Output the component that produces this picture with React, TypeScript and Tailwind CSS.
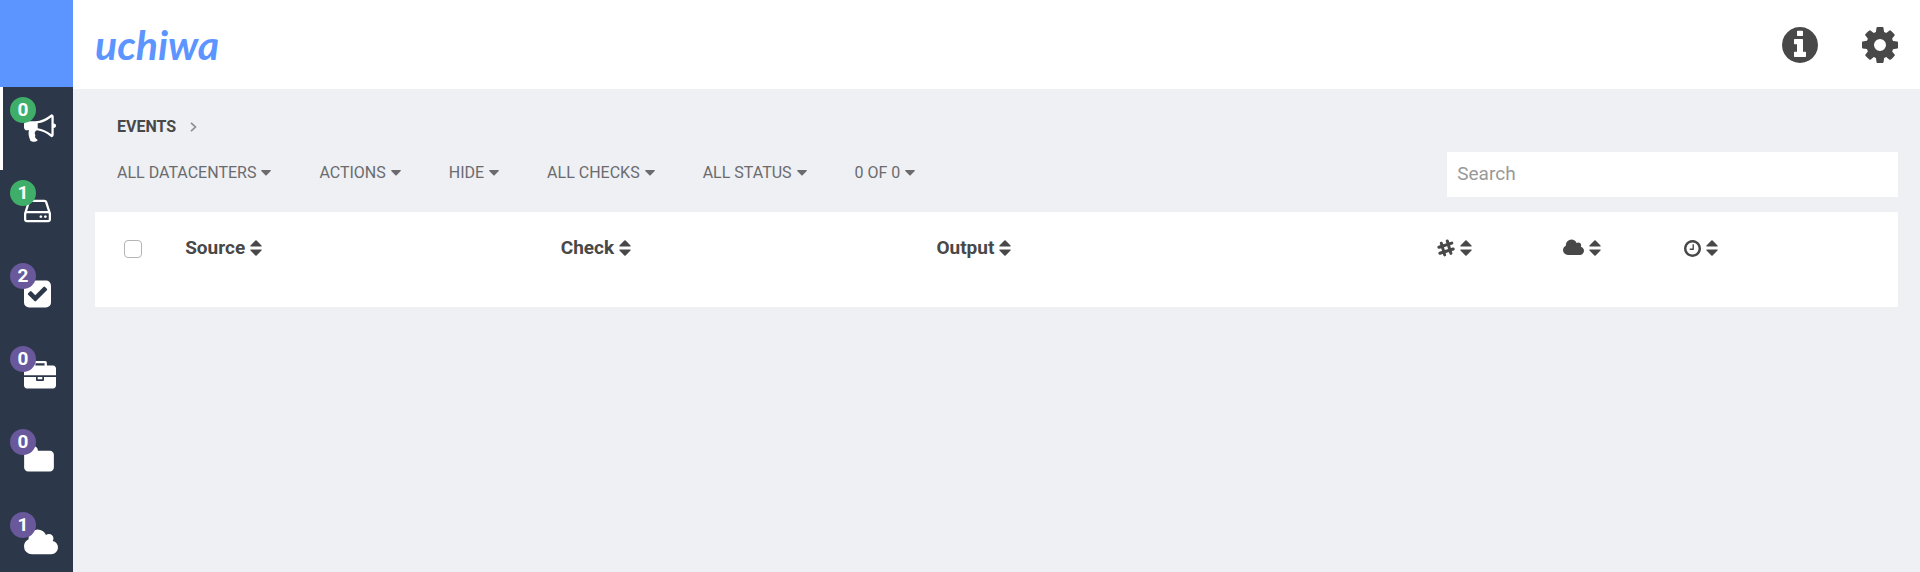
import { useState } from 'react';
import type { ReactNode } from 'react';

type IconProps = { d: string; viewBox?: string; className?: string };

const ICONS = {
  bullhorn:
    'M1664 640q53 0 90.5 37.5t37.5 90.5-37.5 90.5-90.5 37.5v384q0 52-38 90t-90 38q-417-347-812-380-58 19-91 66t-31 100.5 40 92.5q-20 33-23 65.5t6 58 33.5 55 48 50 61.5 50.5q-29 58-111.5 83t-168.5 11.5-132-55.5q-7-23-29.5-87.5t-32-94.5-23-89-15-101 3.5-98.5 22-110.5h-122q-66 0-113-47t-47-113v-192q0-66 47-113t113-47h480q435 0 896-384 52 0 90 38t38 90v384zm-128 604v-954q-394 302-768 343v270q377 42 768 341z',
  hdd:
    'M1168 1216q0 33-23.5 56.5t-56.5 23.5-56.5-23.5-23.5-56.5 23.5-56.5 56.5-23.5 56.5 23.5 23.5 56.5zm256 0q0 33-23.5 56.5t-56.5 23.5-56.5-23.5-23.5-56.5 23.5-56.5 56.5-23.5 56.5 23.5 23.5 56.5zm112 160v-320q0-13-9.5-22.5t-22.5-9.5h-1216q-13 0-22.5 9.5t-9.5 22.5v320q0 13 9.5 22.5t22.5 9.5h1216q13 0 22.5-9.5t9.5-22.5zm-1230-480h1180l-157-482q-4-13-16-21.5t-26-8.5h-782q-14 0-26 8.5t-16 21.5zm1358 160v320q0 66-47 113t-113 47h-1216q-66 0-113-47t-47-113v-320q0-25 16-75l197-606q17-53 63-86t101-33h782q55 0 101 33t63 86l197 606q16 50 16 75z',
  check:
    'M813 1299l614-614q19-19 19-45t-19-45l-102-102q-19-19-45-19t-45 19l-467 467-211-211q-19-19-45-19t-45 19l-102 102q-19 19-19 45t19 45l358 358q19 19 45 19t45-19zm851-883v960q0 119-84.5 203.5t-203.5 84.5h-960q-119 0-203.5-84.5t-84.5-203.5v-960q0-119 84.5-203.5t203.5-84.5h960q119 0 203.5 84.5t84.5 203.5z',
  briefcase:
    'M640 256h512v-128h-512v128zm1152 640v480q0 66-47 113t-113 47h-1472q-66 0-113-47t-47-113v-480h672v160q0 26 19 45t45 19h320q26 0 45-19t19-45v-160h672zm-768 0v128h-256v-128h256zm768-480v384h-1792v-384q0-66 47-113t113-47h352v-160q0-40 28-68t68-28h576q40 0 68 28t28 68v160h352q66 0 113 47t47 113z',
  folder:
    'M1728 608v704q0 92-66 158t-158 66h-1216q-92 0-158-66t-66-158v-960q0-92 66-158t158-66h320q92 0 158 66t66 158v32h672q92 0 158 66t66 158z',
  cloud:
    'M1984 1152q0 159-112.5 271.5t-271.5 112.5h-1088q-185 0-316.5-131.5t-131.5-316.5q0-132 71-241.5t187-163.5q-2-28-2-43 0-212 150-362t362-150q158 0 286.5 88t187.5 230q70-62 166-62 106 0 181 75t75 181q0 75-41 138 129 30 213 134.5t84 239.5z',
  info:
    'M1152 1376v-160q0-14-9-23t-23-9h-96v-512q0-14-9-23t-23-9h-320q-14 0-23 9t-9 23v160q0 14 9 23t23 9h96v320h-96q-14 0-23 9t-9 23v160q0 14 9 23t23 9h448q14 0 23-9t9-23zm-128-896v-160q0-14-9-23t-23-9h-192q-14 0-23 9t-9 23v160q0 14 9 23t23 9h192q14 0 23-9t9-23zm640 416q0 209-103 385.5t-279.5 279.5-385.5 103-385.5-103-279.5-279.5-103-385.5 103-385.5 279.5-279.5 385.5-103 385.5 103 279.5 279.5 103 385.5z',
  cog:
    'M1152 896q0-106-75-181t-181-75-181 75-75 181 75 181 181 75 181-75 75-181zm512-109v222q0 12-8 23t-20 13l-185 28q-19 54-39 91 35 50 107 138 10 12 10 25t-9 23q-27 37-99 108t-94 71q-12 0-26-9l-138-108q-44 23-91 38-16 136-29 186-7 28-36 28h-222q-14 0-24.5-8.5t-11.5-21.5l-28-184q-49-16-90-37l-141 107q-10 9-25 9-14 0-25-11-126-114-165-168-7-10-7-23 0-12 8-23 15-21 51-66.5t54-70.5q-27-50-41-99l-183-27q-13-2-21-12.5t-8-23.5v-222q0-12 8-23t19-13l186-28q14-46 39-92-40-57-107-138-10-12-10-24 0-10 9-23 26-36 98.5-107.5t94.5-71.5q13 0 26 10l138 107q44-23 91-38 16-136 29-186 7-28 36-28h222q14 0 24.5 8.5t11.5 21.5l28 184q49 16 90 37l142-107q9-9 24-9 13 0 25 10 129 119 165 170 7 8 7 22 0 12-8 23-15 21-51 66.5t-54 70.5q26 50 41 98l183 28q13 2 21 12.5t8 23.5z',
  clock:
    'M1024 544v448q0 14-9 23t-23 9h-320q-14 0-23-9t-9-23v-64q0-14 9-23t23-9h224v-352q0-14 9-23t23-9h64q14 0 23 9t9 23zm416 352q0-148-73-273t-198-198-273-73-273 73-198 198-73 273 73 273 198 198 273 73 273-73 198-198 73-273zm224 0q0 209-103 385.5t-279.5 279.5-385.5 103-385.5-103-279.5-279.5-103-385.5 103-385.5 279.5-279.5 385.5-103 385.5 103 279.5 279.5 103 385.5z',
};

const NAV = [
  { label: 'Events', icon: ICONS.bullhorn, viewBox: '0 0 1792 1792', size: 'w-8', count: 0, alert: false },
  { label: 'Clients', icon: ICONS.hdd, viewBox: '128 0 1536 1792', size: 'w-[27px]', count: 1, alert: false },
  { label: 'Checks', icon: ICONS.check, viewBox: '128 0 1536 1792', size: 'w-[27px]', count: 2, alert: true },
  { label: 'Silenced', icon: ICONS.briefcase, viewBox: '0 0 1792 1792', size: 'w-8', count: 0, alert: true },
  { label: 'Aggregates', icon: ICONS.folder, viewBox: '64 0 1664 1792', size: 'w-[30px]', count: 0, alert: true },
  { label: 'Datacenters', icon: ICONS.cloud, viewBox: '64 0 1920 1792', size: 'w-[34px]', count: 1, alert: true },
];

const FILTERS = ['All datacenters', 'Actions', 'Hide', 'All checks', 'All status', '0 of 0'];

function Icon({ d, viewBox = '0 0 1792 1792', className }: IconProps) {
  return (
    <svg viewBox={viewBox} className={className} fill="currentColor" aria-hidden="true">
      <path d={d} />
    </svg>
  );
}

function HashIcon() {
  return (
    <svg viewBox="0 0 18 18" className="w-[18px] h-[18px]" stroke="currentColor" strokeWidth="3" strokeLinecap="round" aria-hidden="true">
      <path d="M4.300 4.200 7.700 15.900M10.300 2 13.900 14.400M1.900 8.300 14.800 4.100M2.900 14.300 16.200 10" />
    </svg>
  );
}

function SortButton({ label, children }: { label: string; children: ReactNode }) {
  return (
    <button type="button" aria-label={`Sort by ${label}`} className="flex items-center gap-[5px] h-6 cursor-pointer">
      {children}
      <svg viewBox="0 0 12 16" className="w-3 h-4" fill="currentColor" aria-hidden="true">
        <path d="M.8 6.5Q-.2 6.3.5 5.4L5.4.5Q6 0 6.6.5L11.5 5.4Q12.2 6.3 11.2 6.5ZM.8 9.5Q-.2 9.7.5 10.6L5.4 15.5Q6 16 6.6 15.5L11.5 10.6Q12.2 9.7 11.2 9.5Z" />
      </svg>
    </button>
  );
}

export default function App() {
  const [active, setActive] = useState('Events');
  const [search, setSearch] = useState('');
  const [allSelected, setAllSelected] = useState(false);

  return (
    <div className="flex min-h-screen bg-[#eef0f4] font-['Roboto',sans-serif] text-[#484848]">
      {/* Sidebar */}
      <aside className="w-[73px] shrink-0 bg-[#2c3849]">
        <div className="h-[87px] bg-[#5c95ff]" />
        <nav>
          {NAV.map(item => (
            <a
              key={item.label}
              href={`#${item.label.toLowerCase()}`}
              aria-label={item.label}
              onClick={() => setActive(item.label)}
              className={`relative flex h-[83px] items-center pl-[21px] pb-0.5 text-white border-l-[3px] ${
                active === item.label ? 'border-white' : 'border-transparent'
              }`}
            >
              <Icon d={item.icon} viewBox={item.viewBox} className={`h-8 ${item.size}`} />
              <span
                className={`absolute left-[7px] top-[10px] flex h-[26px] w-[26px] items-center justify-center rounded-full text-[19px] font-bold ${
                  item.alert ? 'bg-[#69589b]' : 'bg-[#3fae68]'
                }`}
              >
                {item.count}
              </span>
            </a>
          ))}
        </nav>
      </aside>

      <div className="flex-1 min-w-0">
        {/* Top bar */}
        <header className="flex h-[89px] items-center justify-between bg-white pl-[22px] pr-[19px]">
          <a href="#home" className="font-['Lato',cursive] text-[41px] leading-none font-bold italic text-[#5c95ff]">
            uchiwa
          </a>
          <div className="flex gap-[38px]">
            <button type="button" aria-label="Info" className="cursor-pointer">
              <Icon d={ICONS.info} className="h-[42px] w-[42px]" />
            </button>
            <button type="button" aria-label="Settings" className="cursor-pointer">
              <Icon d={ICONS.cog} className="h-[42px] w-[42px]" />
            </button>
          </div>
        </header>

        <main className="px-[22px] pt-[26px]">
          <div className="flex items-center gap-[14px] pl-[22px] h-6">
            <h1 className="text-base font-bold uppercase">Events</h1>
            <svg viewBox="0 0 7 10" className="w-[7px] h-[10px]" fill="none" stroke="#8a8a8d" strokeWidth="1.6" aria-hidden="true">
              <path d="M1 .8 5.5 5 1 9.2" />
            </svg>
          </div>

          {/* Filters */}
          <div className="mt-[13px] flex items-center justify-between">
            <div className="flex gap-12 pl-[22px] pb-1">
              {FILTERS.map(filter => (
                <button key={filter} type="button" className="flex items-center gap-[5px] text-base uppercase text-[#6b6b6e] cursor-pointer">
                  {filter}
                  <svg viewBox="0 0 10 6" className="w-[10px] h-[6px]" fill="currentColor" aria-hidden="true">
                    <path d="M.8 0H9.2Q10.3.2 9.7 1L5.6 5.2Q5 5.7 4.4 5.2L.3 1Q-.3.2.8 0Z" />
                  </svg>
                </button>
              ))}
            </div>
            <input
              type="text"
              aria-label="Search"
              placeholder="Search"
              value={search}
              onChange={e => setSearch(e.target.value)}
              className="h-[45px] w-1/4 bg-white px-[10px] pb-0.5 text-[19px] placeholder:text-[#999999] outline-none"
            />
          </div>

          {/* Events table */}
          <table className="mt-[15px] w-full table-fixed bg-white text-left text-[19px]">
            <thead>
              <tr className="h-[95px] align-top">
                <th className="w-[5%] pl-[29px] pt-[28px]">
                  <input
                    type="checkbox"
                    aria-label="Select all events"
                    checked={allSelected}
                    onChange={e => setAllSelected(e.target.checked)}
                    className="block h-[18px] w-[18px] appearance-none rounded-[4px] border border-[#b5b5b5] bg-white checked:bg-[#5c95ff]"
                  />
                </th>
                <th className="w-5/24 pt-6 font-bold"><SortButton label="source">Source</SortButton></th>
                <th className="w-5/24 pt-6 font-bold"><SortButton label="check">Check</SortButton></th>
                <th className="w-5/18 pt-6 font-bold"><SortButton label="output">Output</SortButton></th>
                <th className="w-[7%] pt-6"><SortButton label="occurrences"><HashIcon /></SortButton></th>
                <th className="w-1/15 pt-6">
                  <SortButton label="datacenter">
                    <Icon d={ICONS.cloud} viewBox="64 0 1920 1792" className="h-5 w-[21px]" />
                  </SortButton>
                </th>
                <th className="pt-6">
                  <SortButton label="time">
                    <Icon d={ICONS.clock} viewBox="128 128 1536 1536" className="h-[17px] w-[17px]" />
                  </SortButton>
                </th>
              </tr>
            </thead>
          </table>
        </main>
      </div>
    </div>
  );
}
